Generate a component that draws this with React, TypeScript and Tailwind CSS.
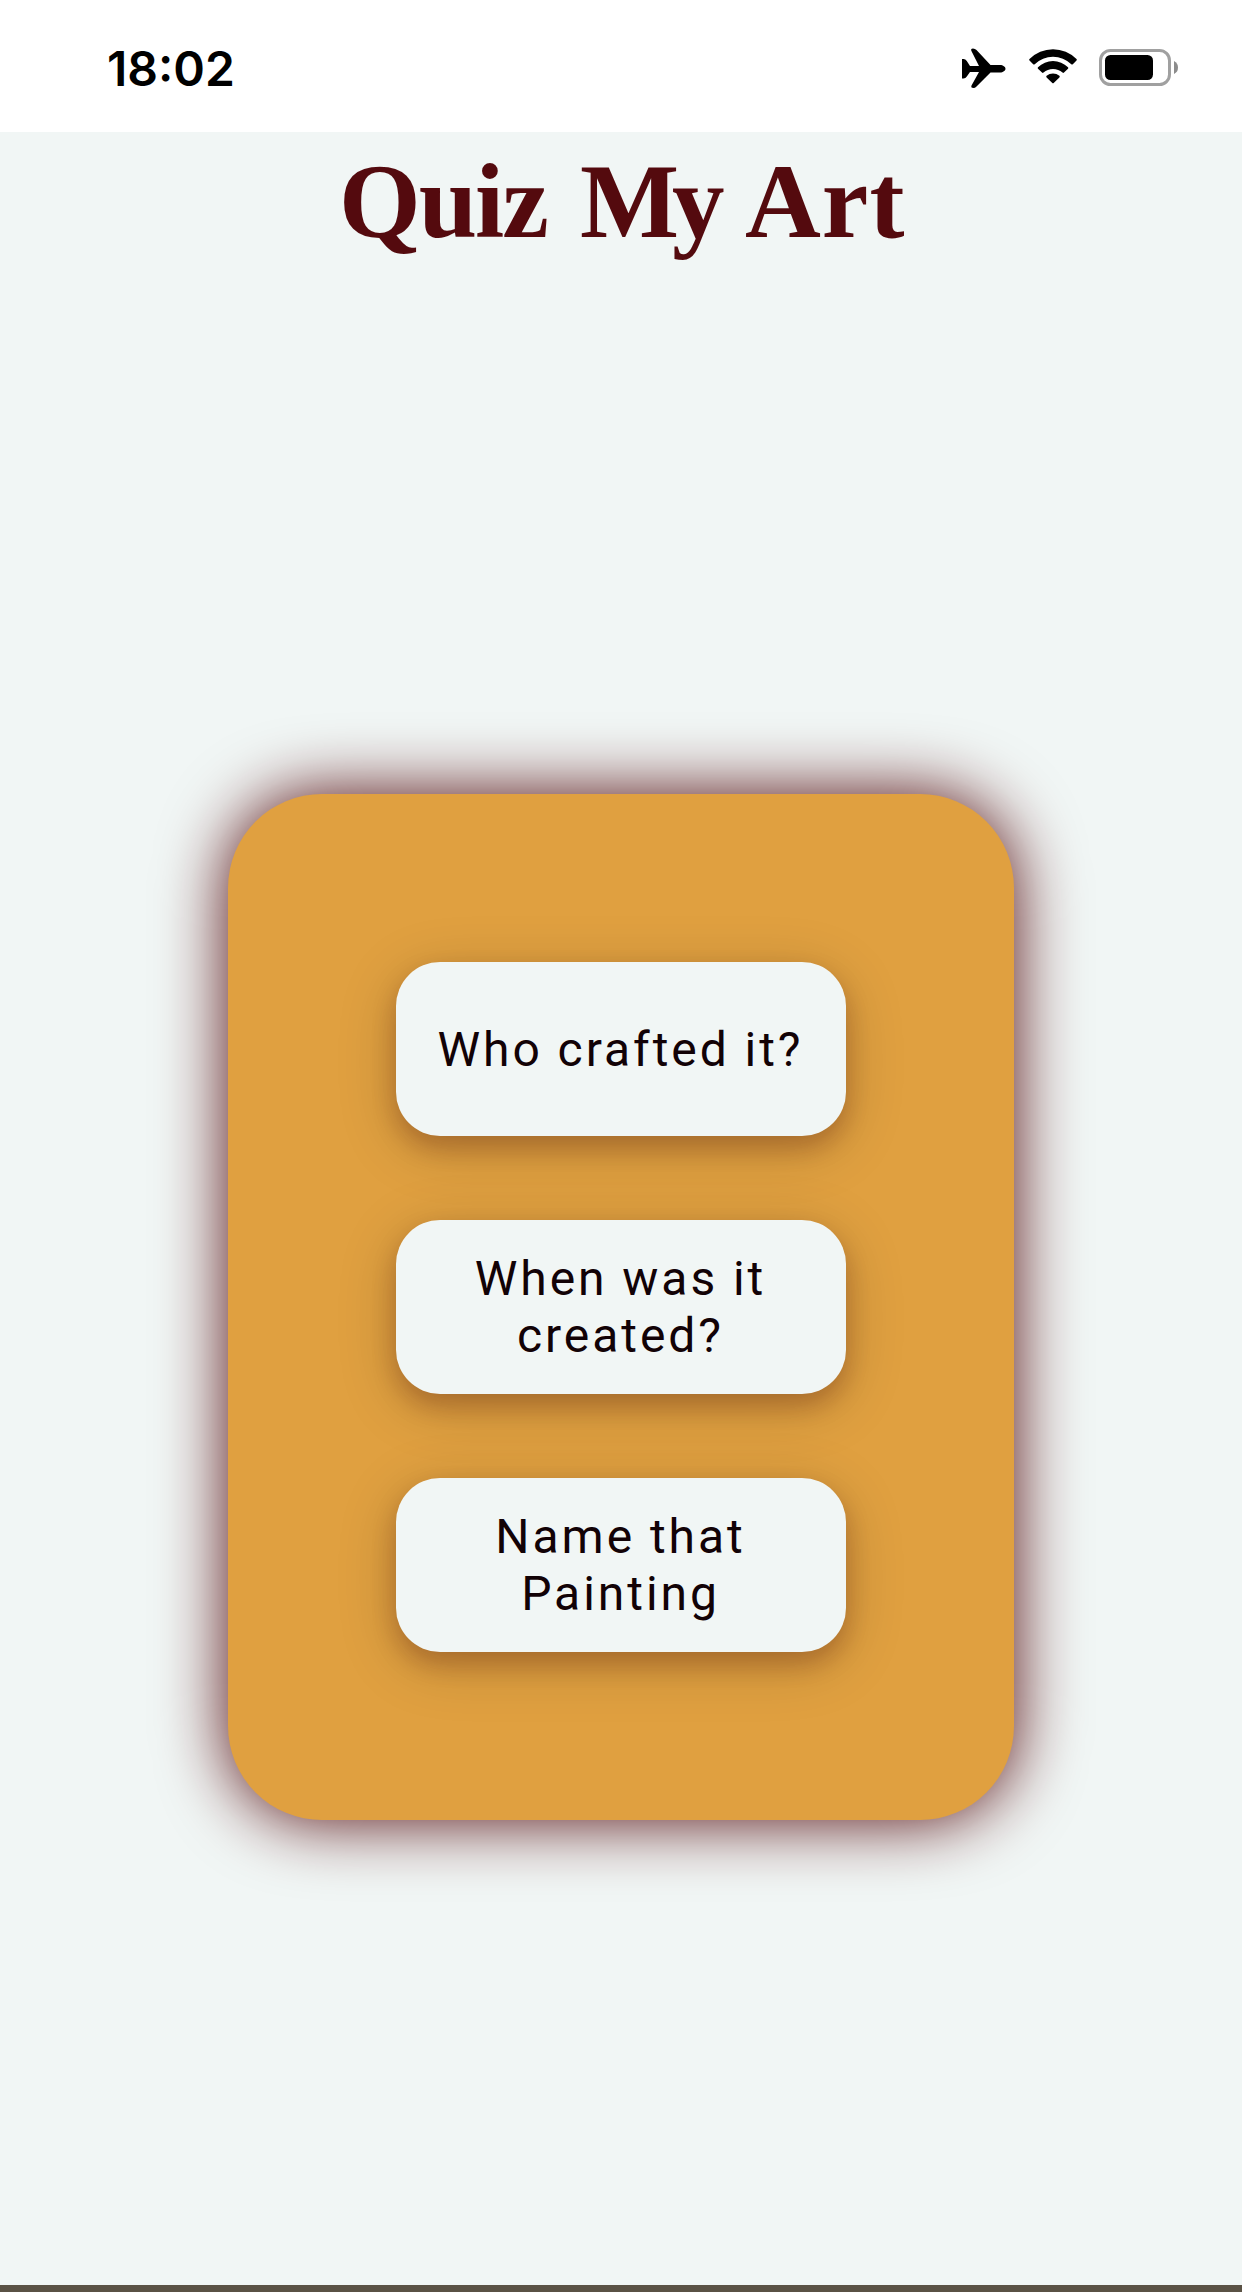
const modes = ["Who crafted it?", "When was it created?", "Name that Painting"];

function StatusBar() {
  return (
    <div className="flex h-[132px] shrink-0 items-start justify-between bg-white pl-[107px] pr-[63px] pt-[38px] text-black">
      <span className="font-['Inter',sans-serif] text-[48px] font-semibold leading-[61px]">18:02</span>
      <div className="flex items-start pt-[10px]">
        <svg width="45" height="42" viewBox="0 0 45 42" fill="currentColor">
          <path d="M0 11h1.500q2 0 3.300 2L8 18h9L9.300 2.800Q8.600.500 11 .500q2 0 3.500 1.600L28.500 17H38c3 0 5.500 1.800 5.500 3.700S41 24.500 38 24.500h-9.500L14.500 38.500Q13 40 11.500 40 8.600 40 9.500 37.500L17 24H8L4.800 28.500q-1.200 2-3.300 2H0Z" />
        </svg>
        <svg className="ml-[20px]" width="52" height="42" viewBox="0 0 52 42" fill="currentColor">
          <path d="M2.500 11a33 33 0 0 1 47 0q.7.8 0 1.500l-3.700 3.700q-.7.700-1.500 0a26 26 0 0 0-36.600 0q-.8.700-1.500 0L2.500 12.500q-.7-.700 0-1.500Z" />
          <path d="M11 19.200a21.500 21.500 0 0 1 30 0q.7.800 0 1.600l-4 3.800q-.7.700-1.500 0a14 14 0 0 0-19 0q-.8.700-1.500 0l-4-3.800q-.7-.800 0-1.600Z" />
          <path d="M19.600 27.800a10 10 0 0 1 12.800 0q.8.800 0 1.600l-5.700 5.500q-.7.600-1.400 0l-5.700-5.500q-.8-.800 0-1.600Z" />
        </svg>
        <svg className="ml-[20px]" width="80" height="40" viewBox="0 0 80 40">
          <rect x="1.500" y="2.500" width="69" height="34" rx="10" fill="none" stroke="#a0a0a0" strokeWidth="3" />
          <rect x="6" y="7" width="48" height="25" rx="5.500" fill="#000" />
          <path d="M75 13q4 2 4 6.500T75 26Z" fill="#8c8c8c" />
        </svg>
      </div>
    </div>
  );
}

export default function App() {
  return (
    <div className="flex h-[2292px] w-[1242px] flex-col overflow-hidden border-b-[7px] border-[#5a5245] bg-[#f1f6f5]">
      <StatusBar />
      <h1 className="flex h-[140px] shrink-0 whitespace-pre pl-[339px] font-['Liberation_Serif',serif] text-[105px] font-bold leading-[139px] text-[#540a0e]">
        <span className="w-[241px] tracking-[-2px]">Quiz </span>
        <span className="w-[165px] tracking-[-7px]">My </span>
        <span className="tracking-[1px]">Art</span>
      </h1>
      <main className="mx-auto mt-[522px] flex h-[1026px] w-[786px] shrink-0 flex-col items-center gap-[84px] rounded-[94px] bg-[#e0a040] pt-[168px] shadow-[0_0_68px_#540b0e]">
        {modes.map((mode) => (
          <button
            key={mode}
            className="flex h-[174px] w-[450px] items-center justify-center rounded-[44px] bg-[#f1f6f5] pl-[35px] pr-[36px] text-center font-['Roboto',sans-serif] text-[48px] leading-[57px] tracking-[2.95px] text-[#120206] shadow-[0_12px_24px_rgba(84,11,14,0.24),0_12px_60px_rgba(0,0,0,0.19)]"
          >
            {mode}
          </button>
        ))}
      </main>
    </div>
  );
}
